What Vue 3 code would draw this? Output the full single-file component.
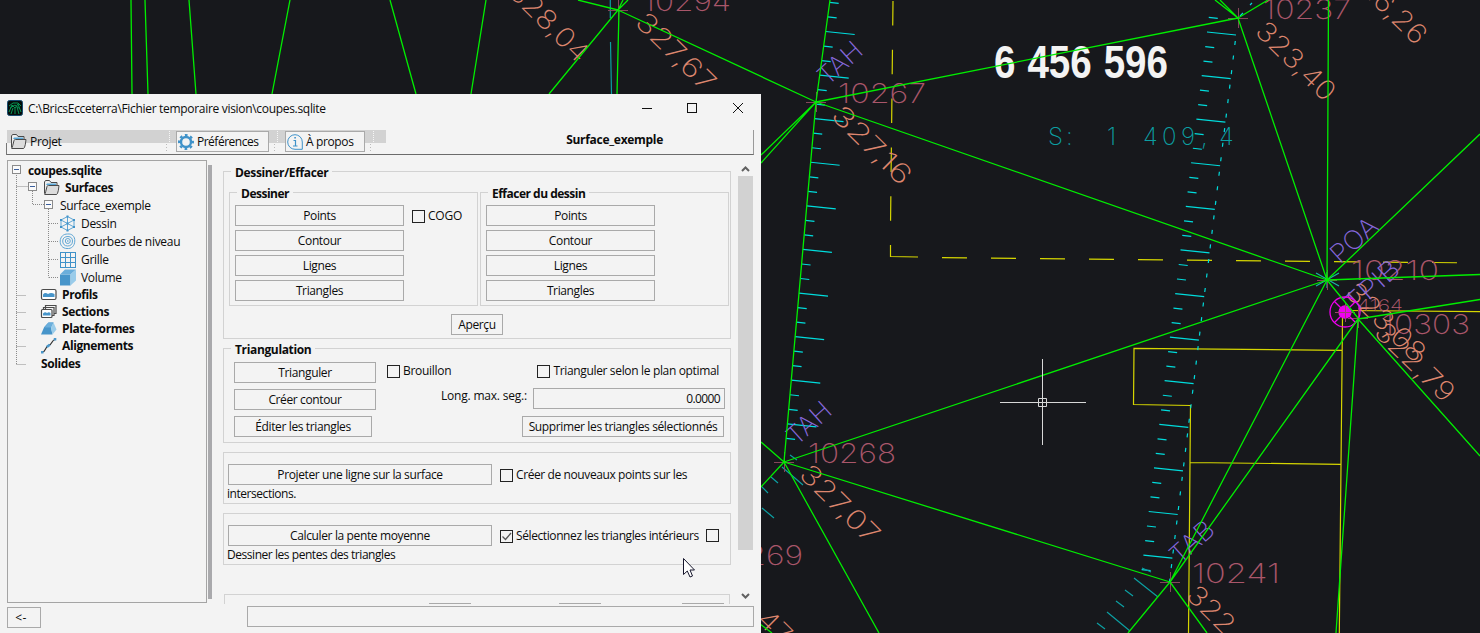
<script setup>
const green = [
  [131, 0, 132, 94], [145, 0, 148, 94], [189, 0, 196, 94], [290, 0, 272, 94], [390, 0, 416, 94], [486, 0, 471, 94],
  [618, 10, 578, 0], [618, 10, 549, 94], [619, 10, 617, 94], [618, 10, 816, 102], [618, 10, 623, 0], [618, 10, 628, 0],
  [830, 0, 816, 102], [816, 102, 784, 462], [816, 102, 1238, 18], [816, 102, 1327, 280], [816, 102, 761, 155], [816, 102, 761, 163],
  [1238, 18, 1215, 0], [1238, 18, 1220, 0], [1238, 18, 1268, 0], [1238, 18, 1327, 280], [1328.5, 0, 1327, 280],
  [1327, 280, 1480, 134], [1327, 280, 1480, 274.5], [1327, 280, 784, 462], [1327, 280, 1170, 582], [1327, 280, 1358, 318],
  [1358, 319, 1480, 299.5], [1358, 319, 1480, 456], [1358, 319, 1170, 582], [1358, 319, 1336, 633],
  [784, 462, 761, 442], [784, 462, 761, 487], [784, 462, 1170, 582], [784, 462, 879, 633],
  [1170, 582, 1128, 633], [1170, 582, 1207, 633], [760, 624, 772, 633],
]
const greenPath = green.map(([a, b, c, d]) => `M${a} ${b}L${c} ${d}`).join('')

let ticks = ''
for (let k = -2; k <= 28; k++) {
  const y = 31.5 + 14.53 * k
  const x = y < 102 ? 830 - y * 0.137 : 816 - (y - 102) * 0.0889
  const big = k % 3 === 0
  ticks += `M${x} ${y}l${big ? 29 : 9} ${big ? 3 : 1}`
}
let dots = ''
for (let k = -1; k <= 37; k++) {
  const y = 32 + 14.53 * k
  const x = 1207 - 0.1216 * (y - 32)
  const big = k % 3 === 0
  ticks += `M${x} ${y}l${big ? 29 : 9} ${big ? 3 : 1}`
  if (k >= 0) dots += `M${x + 28.3} ${y + 9}l-0.5 4`
}

const nodes = [[618, 10], [816, 102], [1238, 18], [1327, 280], [1358, 318], [784, 462], [1170, 582], [1345, 312]]
const crosses = nodes.map(([x, y]) => `M${x - 10} ${y + 0.5}h20M${x + 0.5} ${y - 10}v20`).join('')

const ids = [
  ['10294', 643, 11], ['10267', 838, 103], ['10237', 1263, 19], ['10210', 1351, 280],
  ['10303', 1382, 334], ['10268', 808, 463], ['10241', 1192, 583], ['10269', 715, 565],
]
const heights = [
  ['328,04', 549, 22], ['327,67', 676, 52], ['327,16', 872, 145], ['323,40', 1296, 61], ['326,26', 1387, 4.5],
  ['327,07', 840, 504], ['322,47', 1227, 625], ['322,79', 1415, 362], ['323,08', 1386, 322], ['322,47', 752, 604],
]
const codes = [['TAH', 840, 63, 50], ['TAH', 809, 423, 50], ['TAB', 1192, 542, 50], ['POA', 1354, 240, 54], ['TPIB', 1372, 286, 64]]

const tree = [
  { t: 'coupes.sqlite', b: true, x: 20 },
  { t: 'Surfaces', b: true, x: 36, i: 'folder' },
  { t: 'Surface_exemple', x: 52 },
  { t: 'Dessin', x: 52, i: 'mesh' },
  { t: 'Courbes de niveau', x: 52, i: 'rings' },
  { t: 'Grille', x: 52, i: 'grid' },
  { t: 'Volume', x: 52, i: 'cube' },
  { t: 'Profils', b: true, x: 33, i: 'profile' },
  { t: 'Sections', b: true, x: 33, i: 'sections' },
  { t: 'Plate-formes', b: true, x: 33, i: 'platform' },
  { t: 'Alignements', b: true, x: 33, i: 'align' },
  { t: 'Solides', b: true, x: 33 },
]
const actions = ['Points', 'Contour', 'Lignes', 'Triangles']
</script>

<template>
  <div class="screen">
    <svg class="cad" width="1480" height="633" viewBox="0 0 1480 633" fill="none">
      <text class="parcel" x="994" y="78" textLength="174" lengthAdjust="spacingAndGlyphs">6 456 596</text>
      <g stroke="#d6d600" stroke-width="1.2">
        <path d="M893 1L890.3 245" stroke-dasharray="24.5 24.3" />
        <path d="M890.5 245V256.5L918 257" />
        <path d="M942 257.6L1480 263" stroke-dasharray="25 24" />
        <path d="M1342 350.3L1134 348.3L1133.5 404.5L1190.5 405.5L1188.5 633M1190 462.5L1341 464.3M1342.5 317L1339.3 633M1345 310.5L1480 311.7" />
      </g>
      <g stroke="#00dcdc" stroke-width="1.2">
        <path :d="ticks" />
        <path :d="dots" />
        <path d="M1250 5l2-2M1240 16l3-3" />
      </g>
      <g stroke="#0c9fa2" stroke-width="1.2">
        <path d="M610.3 0V18M610.5 42L611.5 94" />
        <path d="M790 455l7 5M782 467l21 18M771 477l7 6M762 487l6 6M762 508l12 10M1142 568l9 4M1134 578l24 19M1125 590l8 6M1116 601l8 6M1107 612l23 19M1097 623l8 6" />
        <path d="M1316 273l23 13M1316 286l23 -13M1327 272v16" stroke="#18b9a4" />
      </g>
      <path :d="crosses" stroke="#85465a" />
      <g class="thin" font-size="27">
        <text v-for="[t, x, y] in ids" :key="t" :x="x" :y="y" textLength="88" lengthAdjust="spacingAndGlyphs" fill="#a9566a">{{ t }}</text>
        <text x="1357" y="311" font-size="16" textLength="46" lengthAdjust="spacingAndGlyphs" fill="#b35b6f">4164</text>
        <g fill="#dd866e" text-anchor="middle">
          <text v-for="([t, x, y], n) in heights" :key="n" :transform="`translate(${x} ${y}) rotate(44.5)`" x="0" y="9.5" textLength="100" lengthAdjust="spacingAndGlyphs">{{ t }}</text>
        </g>
        <g fill="#8668dc" text-anchor="middle">
          <text v-for="([t, x, y, w], n) in codes" :key="n" :transform="`translate(${x} ${y}) rotate(-42)`" x="0" y="9" font-size="26" :textLength="w" lengthAdjust="spacingAndGlyphs">{{ t }}</text>
        </g>
        <text x="1048 1066 1085 1107 1125 1143 1162 1181 1201 1219" y="145" font-size="24" fill="#0c9fa2">S: 1 409,4</text>
      </g>
      <g stroke="#f000f0" stroke-width="1.3">
        <circle cx="1345" cy="312" r="15" />
        <circle cx="1345" cy="312" r="6" fill="#f000f0" />
        <path d="M1334.500 301.500l21 21M1334.500 322.500l21 -21" />
      </g>
      <path d="M1335 312.500h20M1345.500 302v20" stroke="#a04070" />
      <path :d="greenPath" stroke="#00ee00" stroke-width="1.3" />
      <path d="M1000 402.500h38M1047 402.500h39M1042.500 359v39M1042.500 407v38M1038.500 398.500h8v8h-8zM1038 402.500h9M1042.500 398v9" stroke="#d8d8d8" />
    </svg>

    <div class="window">
      <header class="titlebar">
        <svg width="16" height="16" viewBox="0 0 16 16" fill="none">
          <rect x=".5" y=".5" width="15" height="15" rx="2" fill="#050d0b" stroke="#174c70" />
          <path d="M2 6L6 3L11 3L14 6M2 12L5 5L8 8L11 4L14 12M4 14L6 8M8 8V14M12 14L10 7M3 8L8 5L13 9" stroke="#079653" />
        </svg>
        <span class="title">C:\BricsEcceterra\Fichier temporaire vision\coupes.sqlite</span>
        <svg class="controls" width="102" height="12" viewBox="0 0 102 12" fill="none" stroke="#111">
          <path d="M0 6.500h10" /><rect x="45.500" y="1.500" width="9" height="9" /><path d="M91 1l10 10M101 1l-10 10" />
        </svg>
      </header>

      <div class="toolbar">
        <div class="strip"></div>
        <div class="menu">
          <svg width="17" height="17" viewBox="0 0 17 17"><use href="#i-folder" /></svg><span>Projet</span>
        </div>
        <svg class="sep" width="6" height="20" viewBox="0 0 6 20"><path d="M4.500 0v12M1.500 12v8" stroke="#f6f6f6" stroke-dasharray="1 1" /><path d="M1.500 13v7" stroke="#bbb" stroke-dasharray="1 2" /></svg>
        <div class="btn tool pref">
          <svg width="16" height="16" viewBox="0 0 16 16" fill="none" stroke="#3f92c9"><circle cx="8" cy="8" r="5" stroke-width="2.400" /><circle cx="8" cy="8" r="7" stroke-width="2" stroke-dasharray="2.750 2.750" stroke-dashoffset="1.370" /></svg>
          <span>Préférences</span>
        </div>
        <svg class="sep" width="6" height="20" viewBox="0 0 6 20"><path d="M4.500 0v12M1.500 12v8" stroke="#f6f6f6" stroke-dasharray="1 1" /><path d="M1.500 13v7" stroke="#bbb" stroke-dasharray="1 2" /></svg>
        <div class="btn tool about">
          <svg width="16" height="16" viewBox="0 0 16 16" fill="none" stroke="#3f92c9"><path d="M15.300 15.300V8A7.300 7.300 0 1 0 8 15.300z" /><path d="M6.500 6.500h2v5M6 12h4.500" stroke-width="1.200" /><path d="M7.300 3.800h1.600" stroke-width="1.600" /></svg>
          <span>À propos</span>
        </div>
        <svg class="sep" width="6" height="20" viewBox="0 0 6 20"><path d="M4.500 0v12M1.500 12v8" stroke="#f6f6f6" stroke-dasharray="1 1" /><path d="M1.500 13v7" stroke="#bbb" stroke-dasharray="1 2" /></svg>
        <b class="current">Surface_exemple</b>
      </div>

      <div class="body">
        <div class="treebox">
          <svg class="lines" width="60" height="215" viewBox="0 0 60 215" fill="none">
            <path d="M8.500 14V203.500M8.500 25.500h12M8.500 134.500h10M8.500 151.500h10M8.500 168.500h10M8.500 185.500h10M8.500 203.500h10M24.500 30V43.500M25 43.500h12M40.500 48V116.500M41 62.500h9M41 80.500h9M41 98.500h9M41 116.500h9" stroke="#8a8a8a" stroke-dasharray="1 1" />
            <g stroke="#8b8b8b" fill="#fafafa"><rect x="4.500" y="4.500" width="8" height="8" /><rect x="20.500" y="21.500" width="8" height="8" /><rect x="36.500" y="39.500" width="8" height="8" /></g>
            <path d="M6 8.500h5M22 25.500h5M38 43.500h5" stroke="#3b5f9d" />
          </svg>
          <div v-for="n in tree" :key="n.t" class="node" :class="{ bold: n.b }" :style="{ paddingLeft: n.x + 'px' }">
            <svg v-if="n.i" width="17" height="17" viewBox="0 0 17 17"><use :href="'#i-' + n.i" /></svg>
            <span>{{ n.t }}</span>
          </div>
        </div>
        <div class="treebar"></div>

        <div class="pane">
          <section class="group main">
            <b class="legend">Dessiner/Effacer</b>
            <div class="pair">
              <section class="group sub">
                <b class="legend">Dessiner</b>
                <div class="stack"><div v-for="a in actions" :key="a" class="btn">{{ a }}</div></div>
                <label class="check cogo"><i class="box"></i><span>COGO</span></label>
              </section>
              <section class="group sub">
                <b class="legend">Effacer du dessin</b>
                <div class="stack"><div v-for="a in actions" :key="a" class="btn">{{ a }}</div></div>
              </section>
            </div>
            <div class="btn preview">Aperçu</div>
          </section>

          <section class="group tri">
            <b class="legend">Triangulation</b>
            <div class="row">
              <div class="btn w142">Trianguler</div>
              <label class="check draft"><i class="box"></i><span>Brouillon</span></label>
              <label class="check plan"><i class="box"></i><span>Trianguler selon le plan optimal</span></label>
            </div>
            <div class="row">
              <div class="btn w142">Créer contour</div>
              <span class="long">Long. max. seg.:</span>
              <div class="btn value">0.0000</div>
            </div>
            <div class="row">
              <div class="btn w138">Éditer les triangles</div>
              <div class="btn remove">Supprimer les triangles sélectionnés</div>
            </div>
          </section>

          <section class="group wide">
            <div class="row">
              <div class="btn w264">Projeter une ligne sur la surface</div>
              <label class="check"><i class="box"></i><span>Créer de nouveaux points sur les</span></label>
            </div>
            <div class="under">intersections.</div>
          </section>
          <section class="group wide last">
            <div class="row">
              <div class="btn w264">Calculer la pente moyenne</div>
              <label class="check"><i class="box"><svg width="11" height="11" viewBox="0 0 11 11" fill="none"><path d="M1.500 5.500L4.500 8.500L10 2" stroke="#555" stroke-width="1.300" /></svg></i><span>Sélectionnez les triangles intérieurs</span></label>
              <i class="box extra"></i>
            </div>
            <div class="under">Dessiner les pentes des triangles</div>
          </section>
          <section class="clip"><i></i><i></i><i></i></section>
        </div>

        <div class="scroll">
          <svg width="9" height="6" viewBox="0 0 9 6" fill="none"><path d="M1 5L4.500 1.500L8 5" stroke="#606060" stroke-width="2" /></svg>
          <div class="thumb"></div>
          <svg class="down" width="9" height="6" viewBox="0 0 9 6" fill="none"><path d="M1 1L4.500 4.500L8 1" stroke="#606060" stroke-width="2" /></svg>
        </div>
      </div>

      <footer>
        <div class="btn back">&lt;-</div>
        <div class="status"></div>
      </footer>
    </div>

    <svg class="cursor" width="13" height="20" viewBox="0 0 13 20"><path d="M.5 .5V16.500L4.300 13L7 19L9.500 18L7 12H11.500Z" fill="#fff" stroke="#16162c" /></svg>

    <svg class="defs" width="0" height="0">
      <symbol id="i-folder" viewBox="0 0 17 17">
        <path d="M1.500 14.500V3L2.500 1.500H6.500L8 3.500H14V6" fill="#eee" stroke="#4a4a4a" />
        <path d="M3 6L4 4.500H13V6" fill="#5aa7d6" />
        <path d="M1.700 15.500Q2.500 14 4 7.500Q4.200 6.500 5.500 6.500H16Q15.500 12 14.500 14.500Q14 15.500 13 15.500Z" fill="#dcdcdc" stroke="#4a4a4a" />
      </symbol>
      <symbol id="i-mesh" viewBox="0 0 17 17">
        <path d="M8.500 1.500L15 5V12L8.500 15.500L2 12V5ZM8.500 1.500V15.500M2 5L15 12M15 5L2 12" fill="none" stroke="#5fa6d4" />
        <path d="M7.500 .5h2v2h-2zM14 4h2v2h-2zM14 11h2v2h-2zM7.500 14.500h2v2h-2zM1 11h2v2H1zM1 4h2v2H1zM7.500 7.500h2v2h-2z" fill="#3f92c9" />
      </symbol>
      <symbol id="i-rings" viewBox="0 0 17 17">
        <g fill="none" stroke="#5fa6d4"><path d="M8.500 1C13 .5 16 3.500 15.800 8C15.600 13 12.500 16 8 15.500C3.500 15.500 1 12 1.200 8C1.500 3.500 4.500 1 8.500 1z" /><path d="M9 3.500C12 3.500 13.500 5.500 13.500 8C13.500 11.500 11.500 13 8.500 13C5.500 13 3.700 11 3.700 8C3.700 5 6 3.500 9 3.500z" /><circle cx="8.800" cy="8" r="2.500" /></g><circle cx="8.800" cy="8" r=".8" fill="#4a98cb" />
      </symbol>
      <symbol id="i-grid" viewBox="0 0 17 17">
        <path d="M1 1.500h16M1 6.500h16M1 11.500h16M1 16.500h16M1.500 1v16M6.500 1v16M11.500 1v16M16.500 1v16" fill="none" stroke="#3f92c9" />
      </symbol>
      <symbol id="i-cube" viewBox="0 0 17 17">
        <path d="M1 5.500H11.500V16.500H1z" fill="#4795ca" /><path d="M1 5.500L6 .5H17L11.500 5.500z" fill="#6aaedb" /><path d="M17 .5V11.500L11.500 16.500V5.500z" fill="#9accea" />
      </symbol>
      <symbol id="i-profile" viewBox="0 0 17 17">
        <rect x="1.500" y="3.500" width="14.500" height="10" rx="1.500" fill="#fff" stroke="#4a4a4a" stroke-width="1.200" /><path d="M3 8.500Q5 6 8 8Q11 6 14.500 8V11H3z" fill="#4795ca" />
      </symbol>
      <symbol id="i-sections" viewBox="0 0 17 17">
        <path d="M5.500 6V2.500H16V10.500H14M3.500 6V4.500H14V12.500H12" fill="none" stroke="#4a4a4a" stroke-width="1.200" /><rect x="1.500" y="6.500" width="10.500" height="8" rx="1" fill="#fff" stroke="#4a4a4a" stroke-width="1.200" /><path d="M3 10.500Q5 8.500 7 10Q9 8.500 10.500 10V12.500H3z" fill="#4795ca" />
      </symbol>
      <symbol id="i-platform" viewBox="0 0 17 17">
        <path d="M1 14.500L4 7.500Q4.500 6.500 8.500 2.500H13.500L11 7.500L12.500 14.500z" fill="#4795ca" /><path d="M4.500 7.500L8.500 2.500H13.500L11 7.500z" fill="#6aaedb" /><path d="M13.500 2.500L16.500 9.500L12.500 14.500L11 7.500z" fill="#9accea" />
      </symbol>
      <symbol id="i-align" viewBox="0 0 17 17">
        <path d="M2.500 15C6 14.500 5 10 8.500 8.500C12.500 7.500 11.500 3 15 2.500" fill="none" stroke="#333" stroke-width="1.200" /><path d="M1 14h2.500v2.500H1zM13.800 1h2.500v2.500h-2.500z" fill="#4a98cb" /><path d="M6.800 10L9.800 7.800" stroke="#4a98cb" stroke-width="2.600" />
      </symbol>
    </svg>
  </div>
</template>

<style>
body { background: #17181c; overflow: hidden; }
</style>

<style scoped>
* { box-sizing: border-box; }
.screen { position: relative; width: 1480px; height: 633px; overflow: hidden; background: #17181c; font: 12px/16px "Open Sans", "Noto Sans", sans-serif; letter-spacing: -0.37px; color: #0c0c0c; }
b, .bold { font-weight: 700; letter-spacing: -0.35px; }
svg { display: block; flex: none; }
.cad { position: absolute; left: 0; top: 0; }
.parcel { font: bold 47px "Liberation Sans", sans-serif; fill: #f3f3f3; letter-spacing: 0; word-spacing: 1.5px; }
.thin { font-family: Inter, Roboto, sans-serif; font-weight: 200; letter-spacing: 0; }
.window { position: absolute; left: 0; top: 94px; width: 761px; height: 539px; background: #f3f3f3; display: flex; flex-direction: column; white-space: nowrap; }
.titlebar { height: 36px; flex: none; display: flex; align-items: center; padding: 0 17px 8px 7px; }
.title { margin: 2px 0 0 5px; letter-spacing: -0.31px; }
.controls { margin-left: auto; }
.toolbar { position: relative; height: 25px; flex: none; margin: 0 7px 0 6px; border-bottom: 1px solid #6b6b6b; border-right: 1px solid #999; display: flex; align-items: flex-start; }
.toolbar::before { content: ""; position: absolute; left: 0; top: 13px; width: 1px; height: 12px; background: #777; }
.strip { position: absolute; left: 1px; top: 0; width: 379px; height: 13px; background: #d2d2d2; }
.menu { position: relative; display: flex; align-items: center; width: 154px; margin: 3px 0 0 4px; gap: 3px; letter-spacing: -0.3px; }
.sep { position: relative; margin: 1px 0 0 1px; }
.btn { display: flex; align-items: center; justify-content: center; height: 21px; border: 1px solid #a9a9a9; background: #f3f3f3; padding-top: 1px; flex: none; }
.tool { position: relative; height: 21px; justify-content: flex-start; padding: 0 0 0 1px; gap: 3px; margin-top: 1px; }
.pref { width: 93px; margin-left: 5px; margin-right: 3px; letter-spacing: -0.5px; }
.about { width: 80px; margin-left: 6px; margin-right: 3px; }
.current { margin: 2px 90px 0 auto; letter-spacing: -0.3px; }
.body { height: 449px; flex: none; display: flex; padding: 5px 7px 0 7px; }
.treebox { position: relative; width: 200px; height: 443px; border: 1px solid #a4a4a4; padding-top: 1px; }
.lines { position: absolute; left: 0; top: 0; }
.node { position: relative; height: 18px; display: flex; align-items: center; letter-spacing: -0.3px; }
.node.bold { height: 17px; letter-spacing: -0.38px; }
.node:not(.bold) span { margin-top: 2px; }
.node:last-child { margin-top: 1px; }
.node svg { margin: 0 5px 0 -1px; }
.treebar { width: 4px; height: 434px; margin: 5px 0 0 1px; background: #a9a9ac; }
.pane { width: 508px; height: 444px; margin-left: 11px; overflow: hidden; padding-top: 11px; }
.group { position: relative; border: 1px solid #d2d2d2; }
.legend { position: absolute; left: 7px; top: -7px; padding: 0 4px; line-height: 16px; background: #f3f3f3; }
.main { height: 168px; padding: 20px 1px 0 5px; }
.sub > .legend { letter-spacing: -0.5px; }
.pair { display: flex; gap: 2px; }
.sub { width: 249px; height: 114px; display: flex; padding: 12px 0 0 5px; }
.stack { display: grid; gap: 4px; width: 169px; align-content: start; }
.check { display: flex; align-items: center; gap: 3px; height: 16px; }
.box { width: 13px; height: 13px; border: 1px solid #222; flex: none; }
.cogo { margin: 3px 0 0 8px; letter-spacing: -0.2px; }
.preview { width: 52px; margin: 8px 0 0 222px; }
.tri { height: 95px; margin-top: 9px; padding: 13px 5px 0 10px; display: grid; gap: 6px; align-content: start; }
.row { display: flex; align-items: flex-start; }
.w142 { width: 142px; }
.w138 { width: 138px; }
.w264 { width: 264px; }
.draft { margin: 1px 0 0 11px; letter-spacing: -0.3px; }
.plan { margin: 1px 6px 0 auto; letter-spacing: -0.34px; }
.long { margin: -1px 6px 0 auto; letter-spacing: -0.2px; }
.value { width: 192px; margin-top: -1px; justify-content: flex-end; padding: 1px 4px 0; letter-spacing: -0.6px; }
.remove { width: 202px; margin: 0 1px 0 auto; }
.wide { height: 52px; margin-top: 9px; padding: 11px 3px 0 4px; }
.wide .check { margin: 3px 0 0 8px; letter-spacing: -0.4px; }
.extra { margin: 4px 0 0 7px; }
.under { margin: 1px 0 0 -1px; letter-spacing: -0.45px; }
.clip { height: 30px; margin: 29px 1px 0; border: 1px solid #d2d2d2; display: flex; padding: 8px 5px 0 204px; }
.clip i { width: 42px; height: 20px; border: 1px solid #a9a9a9; flex: none; }
.clip i:nth-child(2) { margin: 0 81px 0 88px; }
.scroll { width: 15px; margin-left: 7px; padding-top: 6px; display: flex; flex-direction: column; align-items: center; }
.thumb { width: 15px; height: 374px; margin-top: 4px; background: #d2d2d2; }
.down { margin-top: 43px; }
footer { display: flex; align-items: flex-start; padding: 2px 7px 0; }
.back { width: 34px; margin-top: 1px; padding-right: 6px; letter-spacing: 0.3px; }
.status { width: 507px; height: 21px; margin-left: 206px; border: 1px solid #a9a9a9; }
.cursor { position: absolute; left: 683px; top: 558px; }
.defs { position: absolute; }
</style>
